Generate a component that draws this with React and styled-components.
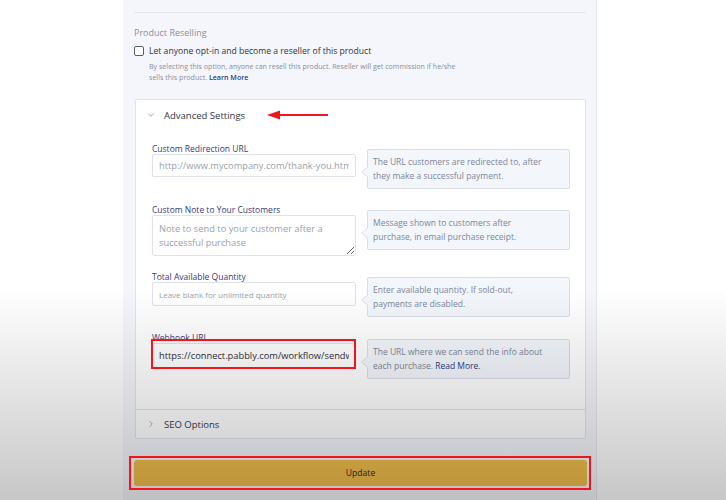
import React from "react";
import styled, { createGlobalStyle, css } from "styled-components";
import { ChevronDown, ChevronRight } from "lucide-react";

const Global = createGlobalStyle`
  html, body { margin: 0; padding: 0; background: #ffffff; }
  body { font-family: "Open Sans", "Noto Sans", sans-serif; overflow: hidden; }
  * { box-sizing: border-box; }
`;

const Page = styled.div`
  width: 726px;
  height: 500px;
  position: relative;
  overflow: hidden;
`;

const Shade = styled.div`
  position: absolute;
  inset: 0;
  z-index: 1;
  pointer-events: none;
  background: linear-gradient(
    to bottom,
    rgba(0, 0, 0, 0) 0px,
    rgba(0, 0, 0, 0) 288px,
    rgba(0, 0, 0, 0.22) 500px
  );
`;

const redBox = css`
  position: relative;
  &::after {
    content: "";
    position: absolute;
    z-index: 2;
    border: 2px solid #f2141c;
    pointer-events: none;
  }
`;

const Panel = styled.div`
  margin-left: 123px;
  width: 474px;
  height: 500px;
  background: #f5f6fb;
  border-right: 1px solid #e7e9f1;
  padding: 12px 10px 0 11px;
  display: flex;
  flex-direction: column;
`;

const Divider = styled.div`
  height: 1px;
  background: #e3e6ee;
`;

const SectionTitle = styled.div`
  margin-top: 13px;
  font-size: 9px;
  line-height: 14px;
  color: #8b90a0;
`;

const CheckRow = styled.label`
  display: flex;
  align-items: center;
  gap: 5px;
  margin-top: 4px;
  font-size: 8.6px;
  line-height: 14px;
  color: #2f3447;
`;

const Box = styled.input.attrs({ type: "checkbox" })`
  appearance: none;
  margin: 0;
  width: 10px;
  height: 10px;
  border: 1px solid #5a5f6e;
  border-radius: 2px;
  background: #fff;
`;

const Help = styled.p`
  margin: 3px 0 0 15px;
  font-size: 7.1px;
  line-height: 11px;
  color: #8a8f9c;
  white-space: nowrap;
`;

const Link = styled.a`
  color: #2b3a82;
  font-weight: 600;
  text-decoration: none;
`;

const Card = styled.div`
  margin: 16px 0 0 1px;
  width: 451px;
  background: #ffffff;
  border: 1px solid #e0e3ec;
  border-radius: 2px;
`;

const CardHeader = styled.div`
  height: 30px;
  display: flex;
  align-items: center;
  padding-left: 10px;
  gap: 8px;
  font-size: 9.5px;
  color: #33374a;
  ${(p) =>
    p.$top &&
    css`
      border-top: 1px solid #e0e3ec;
      height: 29px;
    `}
`;

const Arrow = styled.svg`
  margin-left: 14px;
  position: relative;
  z-index: 2;
`;

const Body = styled.div`
  padding: 13px 15px 30px 16px;
  display: flex;
  flex-direction: column;
  gap: 15px;
`;

const Field = styled.div`
  display: flex;
  align-items: flex-start;
  gap: 11px;
`;

const Control = styled.div`
  width: 204px;
  display: flex;
  flex-direction: column;
  ${(p) =>
    p.$mark &&
    css`
      ${redBox}
      &::after {
        left: -1px;
        right: 0;
        bottom: -1px;
        height: 26px;
      }
    `}
`;

const Label = styled.div`
  font-size: 8.5px;
  line-height: 11px;
  color: #393a7a;
  white-space: nowrap;
`;

const inputBase = css`
  width: 204px;
  font-family: "Open Sans", "Noto Sans", sans-serif;
  font-size: ${(p) => p.$size || 9.3}px;
  color: #2c2f3a;
  background: #fff;
  border: 1px solid #dfe2ea;
  border-radius: 2px;
  padding: 0 6px;
  outline: none;
  &::placeholder { color: #9a9fac; }
`;

const Input = styled.input`
  ${inputBase}
  height: ${(p) => p.$h || 23}px;
`;

const Area = styled.textarea`
  ${inputBase}
  height: 41px;
  padding: 6px 6px 4px;
  line-height: 14px;
  resize: vertical;
`;

const Tip = styled.div`
  position: relative;
  margin-top: ${(p) => p.$top || 6}px;
  width: 203px;
  padding: 5px 6px 5px 5px;
  background: #f3f6fb;
  border: 1px solid #d8dde9;
  border-radius: 2px;
  font-size: 8.5px;
  line-height: 14px;
  color: #7d8699;
  &::before,
  &::after {
    content: "";
    position: absolute;
    top: 16px;
    border-style: solid;
    border-color: transparent;
  }
  &::before {
    left: -7px;
    border-width: 6px 7px 6px 0;
    border-right-color: #d8dde9;
  }
  &::after {
    left: -6px;
    top: 17px;
    border-width: 5px 6px 5px 0;
    border-right-color: #f3f6fb;
  }
`;

const TipLink = styled.a`
  color: #2b3a82;
  text-decoration: none;
`;

const UpdateWrap = styled.div`
  ${redBox}
  margin: 17px 0 0 -5px;
  width: 462px;
  padding: 4px 4px 4px 5px;
  &::after {
    inset: 0;
  }
`;

const UpdateButton = styled.button`
  display: block;
  width: 453px;
  height: 26px;
  border: none;
  border-radius: 3px;
  background: #f0be4b;
  font-family: "Open Sans", "Noto Sans", sans-serif;
  font-size: 8.6px;
  color: #2a2a2a;
`;

const fields = [
  {
    label: "Custom Redirection URL",
    placeholder: "http://www.mycompany.com/thank-you.html",
    tip: ["The URL customers are redirected to, after", "they make a successful payment."],
  },
  {
    label: "Custom Note to Your Customers",
    area: true,
    placeholder: "Note to send to your customer after a successful purchase",
    tip: ["Message shown to customers after", "purchase, in email purchase receipt."],
  },
  {
    label: "Total Available Quantity",
    placeholder: "Leave blank for unlimited quantity",
    size: 8,
    h: 24,
    tip: ["Enter available quantity. If sold-out,", "payments are disabled."],
  },
  {
    label: "Webhook URL",
    value: "https://connect.pabbly.com/workflow/sendwebhookdata",
    mark: true,
    h: 25,
    tipTop: 7,
    tip: ["The URL where we can send the info about", "each purchase. "],
    link: "Read More.",
  },
];

export default function App() {
  return (
    <Page>
      <Global />
      <Panel>
        <Divider />
        <SectionTitle>Product Reselling</SectionTitle>
        <CheckRow>
          <Box />
          Let anyone opt-in and become a reseller of this product
        </CheckRow>
        <Help>
          By selecting this option, anyone can resell this product. Reseller will get commission if he/she
          <br />
          sells this product. <Link href="#">Learn More</Link>
        </Help>
        <Card>
          <CardHeader>
            <ChevronDown size={10} strokeWidth={1.5} color="#777b88" />
            <span>Advanced Settings</span>
            <Arrow width="62" height="10" viewBox="0 0 62 10">
              <path d="M10 5 H61" stroke="#f2141c" strokeWidth="2.2" />
              <path d="M0 5 L13 0.5 L13 9.5 Z" fill="#f2141c" />
            </Arrow>
          </CardHeader>
          <Body>
            {fields.map((f) => (
              <Field key={f.label}>
                <Control $mark={f.mark}>
                  <Label>{f.label}</Label>
                  {f.area ? (
                    <Area placeholder={f.placeholder} />
                  ) : (
                    <Input
                      placeholder={f.placeholder}
                      defaultValue={f.value}
                      $size={f.size}
                      $h={f.h}
                    />
                  )}
                </Control>
                <Tip $top={f.tipTop}>
                  {f.tip[0]}
                  <br />
                  {f.tip[1]}
                  {f.link && <TipLink href="#">{f.link}</TipLink>}
                </Tip>
              </Field>
            ))}
          </Body>
          <CardHeader $top>
            <ChevronRight size={10} strokeWidth={1.5} color="#777b88" />
            <span>SEO Options</span>
          </CardHeader>
        </Card>
        <UpdateWrap>
          <UpdateButton>Update</UpdateButton>
        </UpdateWrap>
      </Panel>
      <Shade />
    </Page>
  );
}
